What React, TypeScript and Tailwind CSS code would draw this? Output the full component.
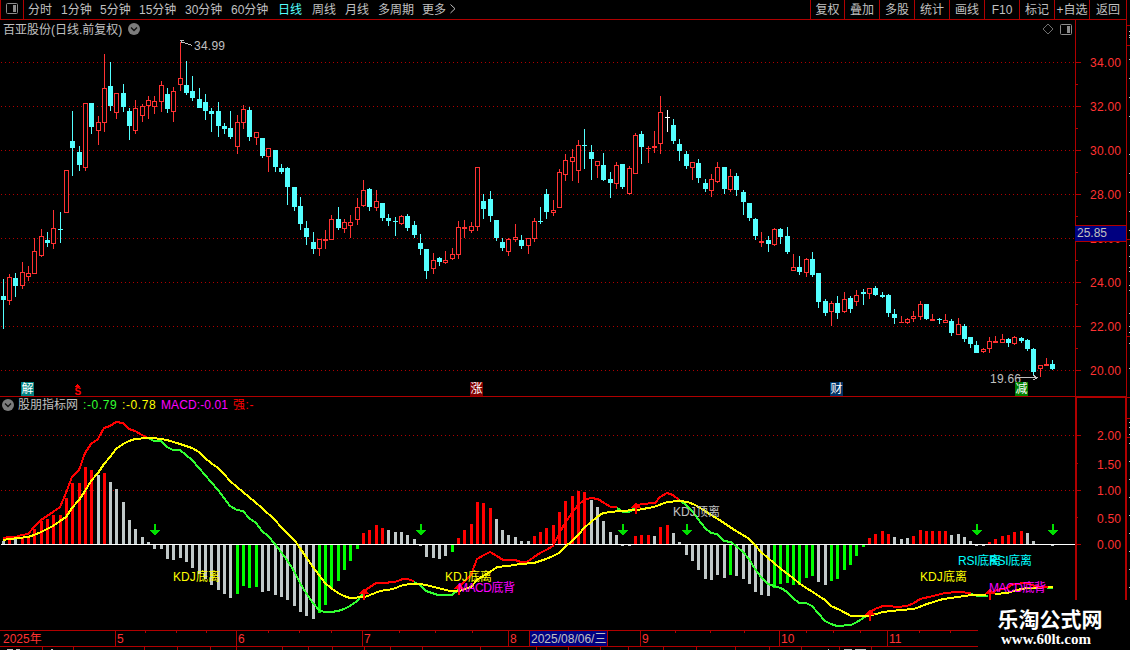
type Kind = "r" | "c" | "w";

// x, high, low, body top, body bottom, kind
const candles: [number, number, number, number, number, Kind][] = [
  [3, 279, 329, 296, 300, "c"], [9, 274, 305, 277, 301, "r"], [15, 273, 297, 278, 286, "c"],
  [22, 262, 289, 272, 286, "r"], [28, 266, 281, 273, 277, "r"], [34, 238, 274, 251, 274, "r"],
  [41, 229, 257, 236, 256, "r"], [47, 232, 247, 240, 243, "c"], [53, 210, 249, 228, 244, "r"],
  [60, 212, 243, 229, 230, "c"], [66, 170, 213, 170, 213, "r"], [72, 111, 176, 141, 148, "c"],
  [79, 146, 171, 152, 165, "c"], [85, 103, 171, 103, 168, "r"], [91, 103, 134, 103, 127, "c"],
  [98, 116, 145, 122, 131, "r"], [104, 54, 132, 88, 123, "r"], [110, 62, 111, 86, 106, "c"],
  [116, 93, 119, 93, 113, "r"], [123, 84, 112, 93, 107, "c"], [129, 108, 140, 111, 126, "c"],
  [135, 100, 134, 108, 131, "r"], [142, 104, 122, 106, 116, "r"], [148, 96, 119, 100, 106, "r"],
  [154, 96, 114, 101, 107, "r"], [161, 81, 112, 85, 102, "r"], [167, 88, 113, 94, 109, "c"],
  [173, 87, 122, 91, 112, "r"], [180, 42, 91, 78, 85, "r"], [186, 61, 95, 85, 93, "c"],
  [192, 76, 101, 91, 98, "c"], [199, 88, 108, 99, 108, "c"], [205, 94, 120, 102, 111, "c"],
  [211, 108, 132, 111, 114, "c"], [218, 102, 137, 111, 126, "c"], [224, 123, 134, 126, 129, "c"],
  [230, 111, 139, 128, 137, "c"], [237, 115, 154, 122, 147, "r"], [243, 105, 129, 109, 123, "r"],
  [249, 107, 141, 110, 137, "c"], [256, 132, 145, 132, 138, "r"], [262, 138, 158, 138, 156, "c"],
  [268, 148, 172, 148, 157, "r"], [275, 150, 172, 150, 167, "c"], [281, 164, 174, 168, 172, "c"],
  [287, 167, 205, 168, 187, "c"], [294, 187, 211, 187, 207, "c"], [300, 197, 230, 206, 224, "c"],
  [306, 221, 245, 228, 237, "c"], [313, 232, 254, 242, 249, "c"], [319, 239, 256, 239, 249, "r"],
  [325, 230, 249, 239, 241, "r"], [331, 215, 240, 219, 240, "r"], [338, 207, 230, 219, 228, "c"],
  [344, 219, 233, 222, 229, "r"], [350, 215, 238, 222, 226, "r"], [357, 198, 225, 207, 220, "r"],
  [363, 180, 207, 190, 206, "r"], [369, 188, 211, 189, 207, "c"], [376, 190, 211, 201, 208, "r"],
  [382, 203, 221, 203, 218, "c"], [388, 214, 226, 218, 221, "c"], [395, 217, 236, 221, 222, "c"],
  [401, 215, 225, 216, 224, "r"], [407, 214, 231, 216, 228, "c"], [414, 221, 238, 225, 235, "c"],
  [420, 234, 255, 243, 249, "c"], [426, 249, 279, 249, 271, "c"], [433, 253, 274, 260, 269, "r"],
  [439, 257, 266, 258, 262, "c"], [445, 251, 264, 260, 263, "r"], [452, 248, 260, 254, 259, "r"],
  [458, 221, 259, 227, 255, "r"], [464, 220, 238, 227, 229, "r"], [471, 222, 233, 226, 231, "r"],
  [477, 167, 231, 167, 227, "r"], [483, 194, 219, 201, 209, "c"], [490, 191, 222, 199, 216, "c"],
  [496, 220, 241, 220, 238, "c"], [502, 238, 251, 242, 248, "c"], [508, 238, 256, 239, 252, "r"],
  [515, 224, 242, 237, 240, "r"], [521, 235, 249, 240, 246, "c"], [528, 238, 254, 238, 246, "r"],
  [534, 218, 242, 221, 239, "r"], [540, 207, 224, 221, 222, "c"], [546, 189, 219, 194, 212, "c"],
  [553, 200, 216, 210, 213, "r"], [559, 169, 208, 172, 208, "r"], [565, 154, 181, 160, 175, "r"],
  [572, 149, 181, 157, 162, "r"], [578, 140, 183, 145, 171, "r"], [584, 129, 169, 145, 146, "c"],
  [591, 145, 180, 152, 159, "c"], [597, 161, 178, 161, 166, "r"], [603, 153, 181, 165, 180, "c"],
  [610, 172, 198, 179, 183, "c"], [616, 162, 189, 165, 184, "r"], [622, 164, 189, 164, 187, "c"],
  [629, 166, 195, 168, 194, "r"], [635, 133, 174, 135, 174, "r"], [641, 131, 164, 134, 147, "c"],
  [648, 146, 163, 148, 149, "r"], [654, 131, 153, 146, 148, "r"], [660, 96, 154, 112, 144, "r"],
  [667, 110, 132, 117, 118, "w"], [673, 119, 144, 125, 141, "c"], [679, 139, 161, 144, 151, "c"],
  [686, 151, 169, 154, 166, "c"], [692, 162, 180, 162, 168, "r"], [698, 159, 183, 163, 178, "c"],
  [705, 179, 192, 183, 189, "c"], [711, 174, 197, 179, 191, "r"], [717, 162, 183, 167, 182, "r"],
  [724, 167, 194, 167, 189, "c"], [730, 169, 192, 176, 190, "r"], [736, 173, 196, 176, 190, "c"],
  [743, 190, 215, 192, 202, "c"], [749, 203, 221, 203, 218, "c"], [755, 218, 240, 219, 236, "c"],
  [761, 232, 247, 241, 243, "r"], [768, 236, 252, 240, 244, "c"], [774, 228, 246, 229, 245, "r"],
  [780, 228, 244, 229, 237, "c"], [787, 227, 254, 236, 252, "c"], [793, 254, 271, 267, 271, "r"],
  [799, 256, 275, 267, 272, "c"], [806, 258, 277, 259, 273, "r"], [812, 252, 277, 259, 275, "c"],
  [818, 273, 308, 273, 302, "c"], [825, 299, 316, 301, 313, "c"], [831, 301, 326, 303, 312, "r"],
  [837, 296, 319, 303, 313, "c"], [844, 292, 313, 299, 312, "r"], [850, 296, 313, 298, 309, "c"],
  [856, 290, 306, 295, 302, "r"], [863, 289, 305, 292, 294, "c"], [869, 288, 299, 288, 294, "r"],
  [875, 286, 296, 288, 295, "c"], [882, 292, 298, 295, 297, "c"], [888, 294, 317, 295, 313, "c"],
  [894, 309, 324, 314, 318, "c"], [901, 316, 323, 322, 323, "r"], [907, 318, 324, 319, 323, "r"],
  [913, 311, 322, 316, 319, "r"], [920, 301, 320, 304, 317, "r"], [926, 304, 320, 304, 319, "c"],
  [932, 314, 321, 319, 321, "r"], [939, 318, 324, 319, 320, "c"], [945, 314, 323, 320, 323, "r"],
  [951, 319, 336, 321, 333, "c"], [958, 318, 335, 324, 335, "r"], [964, 324, 342, 326, 339, "c"],
  [970, 337, 348, 337, 344, "c"], [976, 341, 353, 345, 353, "c"], [983, 348, 353, 349, 352, "r"],
  [989, 337, 353, 341, 349, "r"], [995, 336, 343, 341, 343, "r"], [1002, 334, 343, 339, 343, "r"],
  [1008, 338, 347, 339, 343, "c"], [1014, 336, 345, 337, 344, "r"], [1021, 337, 343, 338, 341, "c"],
  [1027, 339, 351, 340, 349, "c"], [1033, 348, 376, 349, 372, "c"], [1040, 365, 377, 365, 369, "r"],
  [1046, 358, 366, 364, 366, "r"], [1052, 360, 370, 364, 369, "c"],
];

const ZERO = 544;

// x, end of the bar, colour: r red, g green, s silver
const bars: [number, number, "r" | "g" | "s"][] = [
  [3, 541, "s"], [9, 540, "r"], [15, 539, "s"], [22, 538, "r"], [28, 536, "r"], [34, 529, "r"],
  [41, 521, "r"], [47, 519, "r"], [53, 515, "r"], [60, 515, "r"], [66, 498, "r"], [72, 483, "r"],
  [79, 483, "r"], [85, 467, "r"], [91, 470, "r"], [98, 475, "s"], [104, 473, "r"], [110, 482, "s"],
  [116, 489, "s"], [123, 502, "s"], [129, 520, "s"], [135, 529, "s"], [142, 537, "s"], [148, 542, "s"],
  [154, 549, "s"], [161, 549, "s"], [167, 559, "s"], [173, 560, "s"], [180, 558, "s"], [186, 562, "s"],
  [192, 568, "s"], [199, 574, "s"], [205, 579, "s"], [211, 585, "s"], [218, 590, "s"], [224, 594, "s"],
  [230, 598, "s"], [237, 594, "g"], [243, 586, "g"], [249, 588, "g"], [256, 587, "g"], [262, 592, "s"],
  [268, 591, "s"], [275, 595, "s"], [281, 597, "s"], [287, 600, "s"], [294, 606, "s"], [300, 612, "s"],
  [306, 616, "s"], [313, 619, "s"], [319, 613, "g"], [325, 605, "g"], [331, 589, "g"], [338, 581, "g"],
  [344, 570, "g"], [350, 561, "g"], [357, 549, "g"], [363, 533, "r"], [369, 530, "r"], [376, 525, "r"],
  [382, 528, "r"], [388, 530, "s"], [395, 532, "s"], [401, 532, "s"], [407, 535, "s"], [414, 539, "s"],
  [420, 546, "s"], [426, 557, "s"], [433, 558, "s"], [439, 559, "s"], [445, 556, "s"], [452, 552, "g"],
  [458, 538, "r"], [464, 530, "r"], [471, 524, "r"], [477, 502, "r"], [483, 503, "r"], [490, 508, "r"],
  [496, 519, "s"], [502, 530, "s"], [508, 535, "s"], [515, 537, "s"], [521, 541, "s"], [528, 541, "s"],
  [534, 536, "r"], [540, 532, "r"], [546, 528, "r"], [553, 525, "r"], [559, 512, "r"], [565, 501, "r"],
  [572, 496, "r"], [578, 491, "r"], [584, 492, "r"], [591, 500, "s"], [597, 507, "s"], [603, 521, "s"],
  [610, 532, "s"], [616, 535, "s"], [622, 546, "s"], [629, 546, "s"], [635, 536, "r"], [641, 535, "r"],
  [648, 535, "r"], [654, 536, "s"], [660, 527, "r"], [667, 525, "r"], [673, 533, "s"], [679, 542, "s"],
  [686, 555, "s"], [692, 561, "s"], [698, 570, "s"], [705, 579, "s"], [711, 580, "s"], [717, 575, "s"],
  [724, 578, "s"], [730, 575, "g"], [736, 576, "s"], [743, 579, "s"], [749, 584, "s"], [755, 592, "s"],
  [761, 595, "s"], [768, 596, "s"], [774, 588, "g"], [780, 584, "g"], [787, 583, "g"], [793, 585, "g"],
  [799, 585, "g"], [806, 578, "g"], [812, 576, "g"], [818, 582, "s"], [825, 585, "s"], [831, 581, "g"],
  [837, 579, "g"], [844, 570, "g"], [850, 565, "g"], [856, 556, "g"], [863, 547, "g"], [869, 538, "r"],
  [875, 534, "r"], [882, 531, "r"], [888, 534, "r"], [894, 537, "s"], [901, 539, "s"], [907, 538, "s"],
  [913, 536, "r"], [920, 530, "r"], [926, 531, "r"], [932, 531, "r"], [939, 531, "r"], [945, 531, "r"],
  [951, 535, "s"], [958, 534, "s"], [964, 537, "s"], [970, 541, "s"], [976, 546, "s"], [983, 546, "s"],
  [989, 542, "r"], [995, 539, "r"], [1002, 536, "r"], [1008, 535, "r"], [1014, 532, "r"], [1021, 531, "r"],
  [1027, 533, "s"], [1033, 541, "s"], [1052, 546, "s"],
];

const barColors = { r: "#ff0000", g: "#00ff00", s: "#c0c8c8" };
const candleColors = { r: "#ff3232", c: "#54ffff", w: "#ffffff" };

const risingLines = [
  "3,538 9,537 15,537 22,535 28,534 34,527 41,520 47,516 53,512 60,507 66,493 72,477 79,470 85,453 91,444 98,439 104,428 110,426 116,422 123,423 129,429 135,431 142,435 148,438",
  "363,592 367,589 376,583 382,583 395,582 403,579 407,579 414,581",
  "458,589 464,582 471,575 477,559 484,555 490,552 497,556 503,560 515,560 521,562 527,562 534,557 540,553 546,550 553,546 556,540 559,534 565,523 572,513 578,505 584,500 591,498 598,499 604,503 611,507 617,507",
  "635,507 641,504 655,503 660,497 667,493 673,495 679,500",
  "869,613 875,609 883,606 888,606 898,607 907,606 914,603 920,599 933,596 945,593 958,592 971,593",
  "990,594 997,590 1007,588 1013,584 1027,583 1035,586 1042,587 1048,587",
];

const fallingLines = [
  "148,438 154,441 161,441 167,447 173,450 180,450 186,455 192,460 199,468 205,475 211,482 218,490 224,498 230,506 237,510 243,511 249,518 256,523 262,531 268,536 275,544 281,552 287,560 294,571 300,583 306,593 313,603 319,610 324,612 331,612 338,611 344,609 350,606 357,601 363,594",
  "414,582 420,585 426,591 438,595 452,595 458,590",
  "617,508 623,512 629,512 635,508",
  "679,500 686,505 692,511 698,519 705,528 711,533 717,534 724,541 731,542 736,546 743,552 749,559 755,569 761,577 768,584 774,586 781,588 787,592 793,598 799,603 806,603 812,606 818,613 825,621 831,624 837,626 851,625 857,622 865,617 869,614",
  "971,594 978,596 988,596",
  "1047,588 1053,588",
];

const slowLine =
  "3,540 9,539 28,537 34,535 41,532 47,529 53,526 60,521 66,517 72,508 79,500 85,491 91,481 98,473 104,464 110,457 116,449 123,444 129,441 135,439 147,438 154,438 167,440 180,444 192,448 199,452 205,458 211,463 218,468 224,474 230,481 237,487 249,497 262,508 275,520 281,527 289,535 295,541 300,548 306,557 313,567 319,575 325,583 331,588 338,593 344,596 350,598 365,597 370,595 380,591 393,589 403,585 412,584 421,584 430,586 438,588 450,591 460,591 467,588 471,587 478,579 490,572 497,567 508,566 520,564 534,563 546,559 553,556 559,553 565,547 573,540 579,534 584,528 591,522 597,517 603,513 611,512 620,511 637,510 654,507 662,504 667,502 679,501 688,502 695,505 702,509 711,515 718,519 727,525 736,531 748,538 755,545 761,552 768,558 774,563 781,569 793,578 800,584 808,589 825,600 831,606 840,610 851,616 869,616 883,612 900,610 914,609 927,604 943,599 958,597 971,595 986,595";

const periods = [
  { label: "分时", width: "w-[33px]" },
  { label: "1分钟", width: "w-[39px]" },
  { label: "5分钟", width: "w-[39px]" },
  { label: "15分钟", width: "w-[46px]" },
  { label: "30分钟", width: "w-[46px]" },
  { label: "60分钟", width: "w-[47px]" },
  { label: "日线", width: "w-[34px]", active: true },
  { label: "周线", width: "w-[33px]" },
  { label: "月线", width: "w-[33px]" },
  { label: "多周期", width: "w-[44px]" },
  { label: "更多", width: "w-[28px]" },
];

const tools = [
  { label: "复权", width: "w-[34px]" },
  { label: "叠加", width: "w-[35px]" },
  { label: "多股", width: "w-[35px]" },
  { label: "统计", width: "w-[35px]" },
  { label: "画线", width: "w-[35px]" },
  { label: "F10", width: "w-[35px]" },
  { label: "标记", width: "w-[35px]" },
  { label: "+自选", width: "w-[35px]" },
  { label: "返回", width: "w-[37px]" },
];

const signals = [
  { x: 173, y: 581, text: "KDJ底离", color: "#ffff00", length: 47 },
  { x: 445, y: 581, text: "KDJ底离", color: "#ffff00", length: 47 },
  { x: 458, y: 592, text: "MACD底背", color: "#ff00ff", length: 57 },
  { x: 673, y: 516, text: "KDJ顶离", color: "#c0c0c0", length: 47 },
  { x: 958, y: 565, text: "RSI底离", color: "#00ffff", length: 43 },
  { x: 989, y: 565, text: "RSI底离", color: "#00ffff", length: 43 },
  { x: 920, y: 581, text: "KDJ底离", color: "#ffff00", length: 47 },
  { x: 989, y: 592, text: "MACD底背", color: "#ff00ff", length: 57 },
];

const events = [
  { x: 21, text: "解", color: "#008080" },
  { x: 470, text: "涨", color: "#800000" },
  { x: 830, text: "财", color: "#003366" },
  { x: 1015, text: "减", color: "#008000" },
];

const months = [
  { label: "2025年", style: "w-[115px] pl-[3px]" },
  { label: "5", style: "w-[121px] border-l border-[#b00000] pl-px" },
  { label: "6", style: "w-[126px] border-l border-[#b00000] pl-px" },
  { label: "7", style: "w-[146px] border-l border-[#b00000] pl-px" },
  { label: "8", style: "w-[21px] border-l border-[#b00000] pl-px" },
  { label: "2025/08/06/三", style: "w-[79px] border-x border-[#b00000] pl-px bg-[#000080] text-[#c0c0c0]" },
  { label: "", style: "w-[32px]" },
  { label: "9", style: "w-[139px] border-l border-[#b00000] pl-px" },
  { label: "10", style: "w-[108px] border-l border-[#b00000] pl-px" },
  { label: "11", style: "w-[91px] border-l border-[#b00000] pl-px" },
];

const priceTicks = [62, 106, 150, 194, 238, 282, 326, 370];
const macdTicks = [
  { y: 435, label: "2.00", baseline: 440 },
  { y: 463, label: "1.50", baseline: 469 },
  { y: 490, label: "1.00", baseline: 495 },
  { y: 517, label: "0.50", baseline: 523 },
  { y: 544, label: "0.00", baseline: 549 },
];

function PanelIcon() {
  return (
    <svg width="12" height="11" viewBox="0 0 12 11" className="block">
      <rect x="0.5" y="0.5" width="11" height="10" rx="1" fill="none" stroke="#8c8c8c" />
      <rect x="7" y="2" width="3" height="7" fill="#8c8c8c" />
    </svg>
  );
}

function DropIcon() {
  return (
    <svg width="12" height="12" viewBox="0 0 12 12" className="block">
      <circle cx="6" cy="6" r="6" fill="#7c7c7c" />
      <path d="M3 4.5 6 7.5 9 4.5" fill="none" stroke="#101010" strokeWidth="1.3" />
    </svg>
  );
}

function GridLine({ y }: { y: number }) {
  return <line x1="1" x2="1075" y1={y + 0.5} y2={y + 0.5} stroke="#b00000" strokeDasharray="1 3" />;
}

function Candle({ row }: { row: (typeof candles)[number] }) {
  const [x, high, low, top, bottom, kind] = row;
  const color = candleColors[kind];
  const height = bottom - top;
  return (
    <g>
      <rect x={x} y={high} width="1" height={low - high} fill={color} />
      <rect x={x - 2} y={top} width="5" height={height} fill={color} />
      {kind === "r" && height > 2 && (
        <rect x={x - 1} y={top + 1} width="3" height={height - 2} fill="#000000" />
      )}
    </g>
  );
}

function PriceChart() {
  return (
    <svg width="1075" height="358" viewBox="0 38 1075 358" className="block" shapeRendering="crispEdges" fontSize="12">
      {priceTicks.map((y) => (
        <GridLine key={y} y={y} />
      ))}
      {candles.map((row) => (
        <Candle key={row[0]} row={row} />
      ))}
      <path d="M181.5 43v-3.5M180 40.5h4M181 42.5h3M184 42.500l4 1.500l4 1.500" fill="none" stroke="#c0c0c0" />
      <text x="194" y="50" fill="#c0c0c0" textLength="31">34.99</text>
      <text x="990" y="383" fill="#c0c0c0" textLength="31">19.66</text>
      <path d="M1017 377.500h21M1033 375.500l3 1M1033 380l4-2" fill="none" stroke="#c0c0c0" />
      {events.map((e) => (
        <g key={e.x}>
          <rect x={e.x} y="382" width="13" height="14" fill={e.color} />
          <text x={e.x + 0.5} y="393" fill="#ffffff">{e.text}</text>
        </g>
      ))}
      <path d="M75 387h5l-2-3h-1z" fill="#ff0000" />
      <text x="74.500" y="395" fill="#ff0000" fontSize="10" fontWeight="bold">S</text>
    </svg>
  );
}

function MacdChart() {
  return (
    <svg width="1075" height="216" viewBox="0 414 1075 216" className="block" shapeRendering="crispEdges" fontSize="12">
      <GridLine y={435} />
      <GridLine y={490} />
      {bars.map(([x, end, kind]) => (
        <rect
          key={x}
          x={x - 1}
          y={Math.min(end, ZERO)}
          width="3"
          height={Math.abs(end - ZERO)}
          fill={barColors[kind]}
        />
      ))}
      <rect x="1" y={ZERO} width="1074" height="1" fill="#ffffff" />
      <g fill="none" strokeWidth="2">
        {fallingLines.map((points) => (
          <polyline key={points} points={points} stroke="#32ff32" />
        ))}
        {risingLines.slice(0, 5).map((points) => (
          <polyline key={points} points={points} stroke="#ff0000" />
        ))}
        <polyline points={slowLine} stroke="#ffff00" />
        <polyline points="995,594 1007,593 1017,590 1027,588 1037,588 1047,587 1053,587" stroke="#ffff00" />
        <polyline points={risingLines[5]} stroke="#ff0000" />
      </g>
      {[155, 421, 623, 687, 977, 1053].map((x) => (
        <path key={x} d={`M${x - 1} 524h2v6h4l-5 6l-5 -6h4z`} fill="#00e000" />
      ))}
      {[[364, 588], [459, 583], [636, 502], [870, 609], [990, 588]].map(([x, y]) => (
        <path key={x} d={`M${x} ${y}l5 6h-4v6h-2v-6h-4z`} fill="#ff0000" />
      ))}
      {signals.map((s) => (
        <text key={`${s.x}-${s.y}`} x={s.x} y={s.y} fill={s.color} textLength={s.length}>{s.text}</text>
      ))}
    </svg>
  );
}

function PriceAxis() {
  return (
    <div className="relative h-[376px] w-[55px]">
      <svg width="55" height="376" viewBox="1075 20 55 376" className="block" shapeRendering="crispEdges" fontSize="12">
        <rect x="1075" y="20" width="1" height="376" fill="#b00000" />
        <rect x="1126" y="20" width="1" height="376" fill="#b00000" />
        {priceTicks.map((y, i) => (
          <g key={y}>
            <rect x="1076" y={y} width="5" height="1" fill="#b00000" />
            {i < 7 && <rect x="1076" y={y + 22} width="2" height="1" fill="#b00000" />}
            <text x="1090" y={y + 5} fill="#ff3232" textLength="31">{`${34 - i * 2}.00`}</text>
          </g>
        ))}
        {[25, 45, 239, 336].map((y) => (
          <rect key={y} x="1127" y={y} width="3" height="1" fill="#b00000" />
        ))}
        {[31, 35, 37, 59, 78, 97, 116, 154, 173, 192, 211, 230, 245, 256, 267, 271, 285, 290, 313, 326, 332, 343, 368].map((y) => (
          <rect key={y} x="1129" y={y} width="1" height="1" fill="#c0c0c0" />
        ))}
      </svg>
      <div className="absolute top-[205px] left-0 h-[17px] w-[52px] border-y border-r border-[#b00000] bg-[#000080] pl-0.5 text-[12px] leading-[15px] text-[#c0c0c0]">
        25.85
      </div>
    </div>
  );
}

function MacdAxis() {
  return (
    <svg width="55" height="234" viewBox="1075 396 55 234" className="block" shapeRendering="crispEdges" fontSize="12">
      <rect x="1075" y="396" width="52" height="2" fill="#b00000" />
      <rect x="1075" y="396" width="2" height="204" fill="#b00000" />
      <rect x="1125" y="396" width="2" height="204" fill="#b00000" />
      {macdTicks.map((tick, i) => (
        <g key={tick.y}>
          <rect x="1077" y={tick.y} width={i % 2 ? 1 : 4} height="1" fill="#b00000" />
          <text x="1097" y={tick.baseline} fill="#ff3232" textLength="24">{tick.label}</text>
        </g>
      ))}
      {[397, 418, 437].map((y) => (
        <rect key={y} x="1127" y={y} width="3" height="1" fill="#b00000" />
      ))}
      {[422, 427, 434, 443, 461, 479, 497, 515, 533, 551, 569, 587].map((y) => (
        <rect key={y} x="1129" y={y} width="1" height="1" fill="#c0c0c0" />
      ))}
    </svg>
  );
}

export default function App() {
  return (
    <div className="relative h-[650px] w-[1130px] overflow-hidden bg-black font-['Liberation_Sans','Noto_Sans_CJK_SC',sans-serif] text-[12px] leading-[18px] whitespace-nowrap text-[#c0c0c0]">
      <header className="flex h-5 w-[1127px] border-b border-[#b00000]">
        <div className="flex w-6 justify-center border-x border-[#b00000] pt-[3px]">
          <PanelIcon />
        </div>
        <nav className="flex flex-1 pt-px pl-1">
          {periods.map((p) => (
            <span key={p.label} className={p.active ? `${p.width} text-[#54ffff]` : p.width}>
              {p.label}
            </span>
          ))}
          <svg width="6" height="18" viewBox="0 0 6 18" className="block">
            <path d="M0.500 3.500 5 7.700 0.500 12" fill="none" stroke="#c0c0c0" />
          </svg>
        </nav>
        <div className="flex border-r border-[#b00000]">
          {tools.map((t) => (
            <span key={t.label} className={`${t.width} border-l border-[#b00000] pt-px text-center`}>
              {t.label}
            </span>
          ))}
        </div>
      </header>

      <section className="flex h-[376px]">
        <div className="w-[1075px]">
          <div className="flex h-[18px] items-center pr-[3px] pl-[3px]">
            <span className="pt-px">百亚股份(日线.前复权)</span>
            <span className="ml-[6px]">
              <DropIcon />
            </span>
            <svg width="12" height="12" viewBox="0 0 12 12" className="ml-auto block">
              <path d="M6 1 11 6 6 11 1 6z" fill="none" stroke="#8c8c8c" strokeWidth="0.8" />
            </svg>
            <span className="ml-[6px]">
              <PanelIcon />
            </span>
          </div>
          <PriceChart />
        </div>
        <PriceAxis />
      </section>

      <section className="flex h-[234px]">
        <div className="w-[1075px] border-t border-[#b00000]">
          <div className="flex h-[17px] items-center pb-px pl-0.5">
            <DropIcon />
            <span className="ml-1 w-[65px]">股朋指标网</span>
            <span className="w-[39px] tracking-[0.6px] text-[#32ff32]">:-0.79</span>
            <span className="w-[39px] tracking-[0.6px] text-[#ffff00]">:-0.78</span>
            <span className="w-[72px] tracking-[0.1px] text-[#ff00ff]">MACD:-0.01</span>
            <span className="tracking-[0.6px] text-[#ff0000]">强:-</span>
          </div>
          <MacdChart />
        </div>
        <MacdAxis />
      </section>

      <footer className="relative w-[978px] text-[#ff3232]">
        <div className="flex h-[17px] border-y border-[#b00000] leading-[16px]">
          {months.map((m) => (
            <span key={m.label} className={m.style}>
              {m.label}
            </span>
          ))}
        </div>
        <svg width="978" height="3" viewBox="0 647 978 3" className="block" shapeRendering="crispEdges">
          {[42, 73, 144, 177, 210, 236, 282, 308, 332, 364, 390, 422, 480, 536, 568, 600, 628, 663, 696, 735, 769, 801, 839, 871].map((x) => (
            <rect key={x} x={x} y="647" width="1" height="3" fill="#b00000" />
          ))}
          <path d="M7 649.500h6M16 649.500h4M51 649.500h2M828 649.500h1M844 649.500h8M855 649.500h11" stroke="#c0c0c0" />
        </svg>
        <svg width="978" height="3" viewBox="0 630 978 3" className="absolute top-0 left-0" shapeRendering="crispEdges">
          {[145, 176, 206, 268, 299, 331, 399, 435, 472, 675, 710, 744, 806, 833, 860, 919, 950].map((x) => (
            <rect key={x} x={x} y="630" width="1" height="3" fill="#b00000" />
          ))}
        </svg>
      </footer>

      <div className="absolute right-0 bottom-0 flex h-[50px] w-[152px] flex-col items-center bg-black pr-2 text-white">
        <span className="mt-[6px] font-['Noto_Sans_CJK_SC',sans-serif] text-[21px] leading-[24px] font-bold">
          乐淘公式网
        </span>
        <span className="mt-px mr-2 font-['Liberation_Serif',serif] text-[15px] leading-[16px] font-bold">
          www.60lt.com
        </span>
      </div>
    </div>
  );
}
